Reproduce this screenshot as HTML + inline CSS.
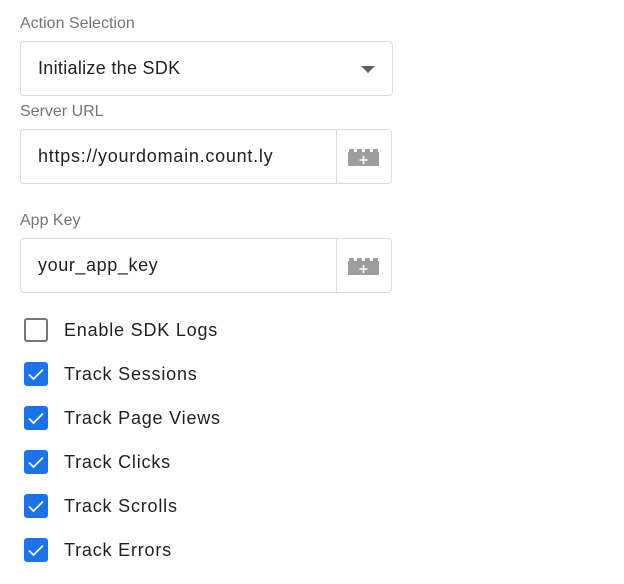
<!DOCTYPE html>
<html><head><style>
body{margin:0;background:#fff;font-family:"Liberation Sans",Arial,sans-serif;width:624px;height:584px;position:relative;overflow:hidden}
.lbl{position:absolute;left:20px;font-size:16px;color:#757575}
.box{position:absolute;left:20px;border:1px solid #dadce0;border-radius:4px;box-sizing:border-box;font-size:18px;color:#202124}
.box .t{position:absolute;left:17px;top:0;line-height:52px;letter-spacing:.4px}
.div{position:absolute;left:315px;top:0;bottom:0;border-left:1px solid #dadce0}
.ic{position:absolute;left:326px;top:17px}
.cb{position:absolute;left:24px;width:24px;height:24px;box-sizing:border-box;border-radius:3px}
.un{border:2px solid #757575}
.ch{background:#1a73e8}
.ct{position:absolute;left:64px;font-size:18px;color:#202124;letter-spacing:.8px}
</style></head><body>
<div class="lbl" style="top:15px">Action Selection</div>
<div class="box" style="top:41px;width:373px;height:55px"><div class="t" style="line-height:53px;letter-spacing:.3px">Initialize the SDK</div>
<div style="position:absolute;left:340px;top:24px;width:0;height:0;border-left:7px solid transparent;border-right:7px solid transparent;border-top:7px solid #5f6368"></div></div>
<div class="lbl" style="top:103px">Server URL</div>
<div class="box" style="top:129px;width:372px;height:55px"><div class="t" style="letter-spacing:.75px">https://yourdomain.count.ly</div><div class="div"></div>
<svg class="ic" width="32" height="20" viewBox="0 0 32 20"><path d="M1 5h31v14H1z M2 2h5v4H2z M10 2h5v4h-5z M18 2h5v4h-5z M26 2h5v4h-5z" fill="#9e9e9e"/><path d="M16.5 9v8M12.5 13h8" stroke="#fff" stroke-width="1.6"/></svg></div>
<div class="lbl" style="top:212px">App Key</div>
<div class="box" style="top:238px;width:372px;height:55px"><div class="t" style="letter-spacing:.6px">your_app_key</div><div class="div"></div>
<svg class="ic" width="32" height="20" viewBox="0 0 32 20"><path d="M1 5h31v14H1z M2 2h5v4H2z M10 2h5v4h-5z M18 2h5v4h-5z M26 2h5v4h-5z" fill="#9e9e9e"/><path d="M16.5 9v8M12.5 13h8" stroke="#fff" stroke-width="1.6"/></svg></div>

<div class="cb un" style="top:318px"></div><div class="ct" style="top:320px">Enable SDK Logs</div>
<div class="cb ch" style="top:362px"><svg width="24" height="24"><path d="M5 12.5l4.5 4.5L19 7.5" stroke="#fff" stroke-width="1.7" fill="none"/></svg></div><div class="ct" style="top:364px">Track Sessions</div>
<div class="cb ch" style="top:406px"><svg width="24" height="24"><path d="M5 12.5l4.5 4.5L19 7.5" stroke="#fff" stroke-width="1.7" fill="none"/></svg></div><div class="ct" style="top:408px">Track Page Views</div>
<div class="cb ch" style="top:450px"><svg width="24" height="24"><path d="M5 12.5l4.5 4.5L19 7.5" stroke="#fff" stroke-width="1.7" fill="none"/></svg></div><div class="ct" style="top:452px">Track Clicks</div>
<div class="cb ch" style="top:494px"><svg width="24" height="24"><path d="M5 12.5l4.5 4.5L19 7.5" stroke="#fff" stroke-width="1.7" fill="none"/></svg></div><div class="ct" style="top:496px">Track Scrolls</div>
<div class="cb ch" style="top:538px"><svg width="24" height="24"><path d="M5 12.5l4.5 4.5L19 7.5" stroke="#fff" stroke-width="1.7" fill="none"/></svg></div><div class="ct" style="top:540px">Track Errors</div>
</body></html>
